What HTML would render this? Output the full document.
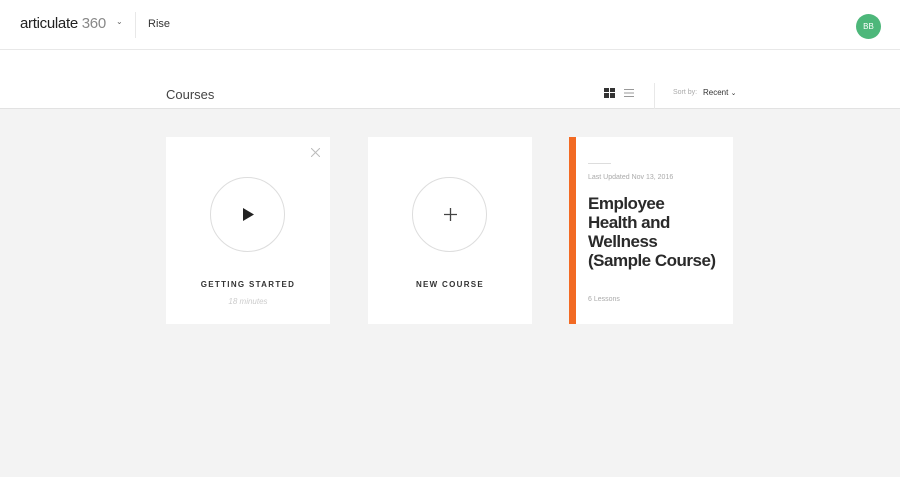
<!DOCTYPE html>
<html><head><meta charset="utf-8"><style>
*{margin:0;padding:0;box-sizing:border-box}
body{width:900px;height:477px;background:#f3f3f3;font-family:"Liberation Sans",sans-serif;position:relative;overflow:hidden;color:#333}
.hdr{position:absolute;left:0;top:0;width:900px;height:50px;background:#fff;border-bottom:1px solid #e8e8e8}
.sub{position:absolute;left:0;top:50px;width:900px;height:59px;background:#fff;border-bottom:1px solid #e2e2e2}
.abs{position:absolute}
.card{position:absolute;top:137px;width:164px;height:187px;background:#fff}
.circ{position:absolute;left:44px;top:40px;width:75px;height:75px;border:1px solid #ddd;border-radius:50%}
.lbl{position:absolute;left:0;width:100%;text-align:center;font-size:8px;font-weight:bold;letter-spacing:1.3px;color:#333}
</style></head><body>
<div class="hdr">
 <div class="abs" style="left:20px;top:15px;font-size:15px;color:#222;letter-spacing:-0.3px">articulate<span style="color:#888;font-weight:300"> 360</span></div>
 <div class="abs" style="left:116px;top:17px;font-size:8px;color:#666">&#8964;</div>
 <div class="abs" style="left:135px;top:12px;width:1px;height:26px;background:#e8e8e8"></div>
 <div class="abs" style="left:148px;top:18px;font-size:11px;color:#333">Rise</div>
 <div class="abs" style="left:856px;top:14px;width:25px;height:25px;border-radius:50%;background:#4db77a;color:#fff;font-size:8px;text-align:center;line-height:25px">BB</div>
</div>
<div class="sub">
 <div class="abs" style="left:166px;top:37px;font-size:13px;color:#444">Courses</div>
 <svg class="abs" style="left:604px;top:38px" width="11" height="10"><rect x="0" y="0" width="5" height="4" fill="#333"/><rect x="6" y="0" width="5" height="4" fill="#333"/><rect x="0" y="5" width="5" height="5" fill="#333"/><rect x="6" y="5" width="5" height="5" fill="#333"/></svg>
 <svg class="abs" style="left:624px;top:38px" width="10" height="10"><rect y="1" width="10" height="1" fill="#999"/><rect y="4.5" width="10" height="1" fill="#999"/><rect y="8" width="10" height="1" fill="#999"/></svg>
 <div class="abs" style="left:654px;top:33px;width:1px;height:26px;background:#e8e8e8"></div>
 <div class="abs" style="left:673px;top:39px;font-size:7px;color:#aaa">Sort by:</div>
 <div class="abs" style="left:703px;top:38px;font-size:8px;color:#333">Recent <span style="font-size:7px">&#8964;</span></div>
</div>
<div class="card" style="left:166px">
 <svg class="abs" style="left:145px;top:11px" width="9" height="9"><path d="M0 0L9 9M9 0L0 9" stroke="#bbb" stroke-width="1"/></svg>
 <div class="circ"></div>
 <svg class="abs" style="left:77px;top:71px" width="11" height="13"><path d="M0 0L11 6.5L0 13Z" fill="#222"/></svg>
 <div class="lbl" style="top:143px">GETTING STARTED</div>
 <div class="abs" style="left:0;width:100%;top:160px;text-align:center;font-size:8px;font-style:italic;color:#ccc">18 minutes</div>
</div>
<div class="card" style="left:368px">
 <div class="circ"></div>
 <svg class="abs" style="left:76px;top:71px" width="13" height="13"><path d="M6.5 0V13M0 6.5H13" stroke="#444" stroke-width="1.3"/></svg>
 <div class="lbl" style="top:143px">NEW COURSE</div>
</div>
<div class="card" style="left:569px">
 <div class="abs" style="left:0;top:0;width:7px;height:187px;background:#f26a23"></div>
 <div class="abs" style="left:19px;top:26px;width:23px;height:1px;background:#ddd"></div>
 <div class="abs" style="left:19px;top:37px;font-size:7px;color:#aaa">Last Updated Nov 13, 2016</div>
 <div class="abs" style="left:19px;top:57px;font-size:17px;font-weight:bold;line-height:19px;color:#2a2a2a;letter-spacing:-0.5px">Employee<br>Health and<br>Wellness<br>(Sample Course)</div>
 <div class="abs" style="left:19px;top:159px;font-size:7px;color:#aaa">6 Lessons</div>
</div>
</body></html>
